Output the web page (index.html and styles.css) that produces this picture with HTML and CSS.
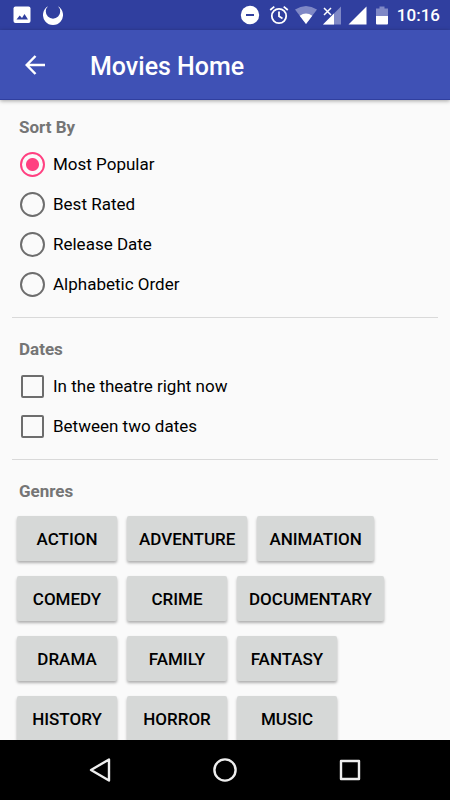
FILE: index.html
```html
<!DOCTYPE html>
<html lang="en">
<head>
<meta charset="utf-8">
<meta name="viewport" content="width=device-width, initial-scale=1">
<title>Movies Home</title>
<link rel="stylesheet" href="styles.css">
</head>
<body>
<div class="status">
  <div class="status-group">
    <svg width="18" height="18" viewBox="0 0 18 18"><rect x="0.5" y="0.5" width="17" height="16.500" rx="2" fill="#fff"/><path d="M3.500 13.500l3.200-4 2.300 2.400L11.500 8l3.500 5.500z" fill="#303f9f"/></svg>
    <svg width="20" height="20" viewBox="0 0 20 20"><path d="M5 1.300A10 10 0 1 0 15 1.300A7.200 7.200 0 1 1 5 1.300z" fill="#fff"/></svg>
  </div>
  <div class="status-group status-right">
    <svg width="20" height="20" viewBox="0 0 20 20"><circle cx="10" cy="10" r="9.200" fill="#fff"/><path d="M6 10h8" stroke="#303f9f" stroke-width="2"/></svg>
    <svg class="spaced" width="20" height="20" viewBox="0 0 20 20" fill="none" stroke="#fff" stroke-width="1.800"><circle cx="10" cy="11" r="7.200"/><path d="M10 6.500V11.300l3.500 2.200M1.200 5L5.300 1.600M18.800 5L14.700 1.600"/></svg>
    <svg width="22" height="18" viewBox="0 0 22 18"><path d="M0 3.500Q11-3.500 22 3.500L11 18z" fill="#7f88c6"/><path d="M4.700 9.700Q11 5.500 17.300 9.700L11 18z" fill="#fff"/></svg>
    <svg width="19" height="19" viewBox="0 0 19 19"><path d="M18 0.500V18.500H0z" fill="#7f88c6"/><path d="M11 7.500V18.500H0z" fill="#fff"/><path d="M0 0h9v9l-3 1H0z" fill="#303f9f"/><path d="M1 2l7 7M8 2L1 9" stroke="#fff" stroke-width="1.500"/></svg>
    <svg width="19" height="19" viewBox="0 0 19 19"><path d="M18.500 0.500V18.500H0.500z" fill="#fff"/></svg>
    <svg class="spaced" width="12" height="19" viewBox="0 0 12 19"><path d="M0 2.500h3.500V0.500h5v2H12V10H0z" fill="#7f88c6"/><path d="M0 10h12v7.500a1 1 0 0 1-1 1H1a1 1 0 0 1-1-1z" fill="#fff"/></svg>
    <span class="clock spaced">10:16</span>
  </div>
</div>
<header class="appbar">
  <button type="button" aria-label="Back"><svg width="20" height="20" viewBox="0 0 20 20" fill="none" stroke="#fff" stroke-width="2.500"><path d="M20 10H2M10.500 1L1.700 10l8.800 9"/></svg></button>
  <h1>Movies Home</h1>
</header>
<main>
  <section>
    <h2>Sort By</h2>
    <label class="option"><input type="radio" name="sort" checked>Most Popular</label>
    <label class="option"><input type="radio" name="sort">Best Rated</label>
    <label class="option"><input type="radio" name="sort">Release Date</label>
    <label class="option"><input type="radio" name="sort">Alphabetic Order</label>
  </section>
  <section>
    <h2>Dates</h2>
    <label class="option"><input type="checkbox">In the theatre right now</label>
    <label class="option"><input type="checkbox">Between two dates</label>
  </section>
  <section>
    <h2>Genres</h2>
    <div class="genres">
      <button type="button">ACTION</button>
      <button type="button">ADVENTURE</button>
      <button type="button">ANIMATION</button>
      <button type="button">COMEDY</button>
      <button type="button">CRIME</button>
      <button type="button">DOCUMENTARY</button>
      <button type="button">DRAMA</button>
      <button type="button">FAMILY</button>
      <button type="button">FANTASY</button>
      <button type="button">HISTORY</button>
      <button type="button">HORROR</button>
      <button type="button">MUSIC</button>
    </div>
  </section>
</main>
<nav class="navbar">
  <button type="button" aria-label="Back"><svg width="26" height="26" viewBox="0 0 26 26" fill="none" stroke="#eee" stroke-width="2.400" stroke-linejoin="round"><path d="M22 2.500v21L4 13z"/></svg></button>
  <button type="button" aria-label="Home"><svg width="26" height="26" viewBox="0 0 26 26" fill="none" stroke="#eee" stroke-width="2.400"><circle cx="13" cy="13" r="10.600"/></svg></button>
  <button type="button" aria-label="Recent apps"><svg width="26" height="26" viewBox="0 0 26 26" fill="none" stroke="#eee" stroke-width="2.400" stroke-linejoin="round"><path d="M4 4h18v18H4z"/></svg></button>
</nav>
</body>
</html>
```
FILE: styles.css
```css
* {
  box-sizing: border-box;
}

body {
  margin: 0;
  height: 100vh;
  display: flex;
  flex-direction: column;
  background: #fafafa;
  color: #000;
  font-family: Roboto, "Liberation Sans", sans-serif;
  font-size: 17px;
}

button {
  border: 0;
  padding: 0;
  background: none;
  font: inherit;
  color: inherit;
}

svg {
  display: block;
}

.status {
  flex: none;
  height: 30px;
  padding: 0 10px 0 13px;
  display: flex;
  justify-content: space-between;
  align-items: center;
  background: #303f9f;
  color: #fff;
}

.status-group {
  display: flex;
  align-items: center;
  gap: 12px;
}

.status-right {
  gap: 6px;
}

.spaced {
  margin-left: 3px;
}

.clock {
  font-weight: 500;
  line-height: 30px;
}

.appbar {
  flex: none;
  position: relative;
  height: 70px;
  padding: 0 25px;
  display: flex;
  align-items: center;
  gap: 45px;
  background: #3f51b5;
  border-bottom: 1px solid #303f9f;
  box-shadow: 0 1px 4px rgba(0, 0, 0, 0.35);
  color: #fff;
}

h1 {
  margin: 0;
  padding-top: 4px;
  font-size: 25px;
  line-height: 30px;
  font-weight: 500;
}

main {
  flex: 1;
  min-height: 0;
  overflow-y: auto;
  scrollbar-width: none;
  padding: 0 12px;
}

section {
  padding: 21px 0 13px;
  border-bottom: 1px solid #d9d9d9;
}

section:first-child {
  padding-top: 17px;
}

section:last-child {
  border-bottom: 0;
}

h2 {
  margin: 0 7px 7px;
  font-size: 17px;
  line-height: 20px;
  font-weight: 700;
  color: #757575;
}

.option {
  display: flex;
  align-items: center;
  height: 40px;
  padding-left: 8px;
  gap: 8px;
}

.option input {
  appearance: none;
  flex: none;
  margin: 0;
  border: 2px solid #6d6d6d;
}

.option input[type="radio"] {
  width: 25px;
  height: 25px;
  border-radius: 50%;
}

.option input[type="radio"]:checked {
  border-color: #ff4081;
  background: radial-gradient(circle, #ff4081 6px, transparent 7px);
}

.option input[type="checkbox"] {
  width: 23px;
  height: 23px;
  margin: 0 1px;
  border-radius: 2px;
}

.genres {
  display: flex;
  flex-wrap: wrap;
  gap: 15px 10px;
  padding: 8px 5px 0;
}

.genres button {
  min-width: 100px;
  height: 45px;
  padding: 0 12px;
  border-radius: 2px;
  background: #d6d8d7;
  box-shadow: 0 2px 3px rgba(0, 0, 0, 0.3);
  font-weight: 500;
}

.navbar {
  flex: none;
  position: relative;
  height: 60px;
  display: flex;
  justify-content: center;
  align-items: center;
  gap: 99px;
  background: #000;
}
```
